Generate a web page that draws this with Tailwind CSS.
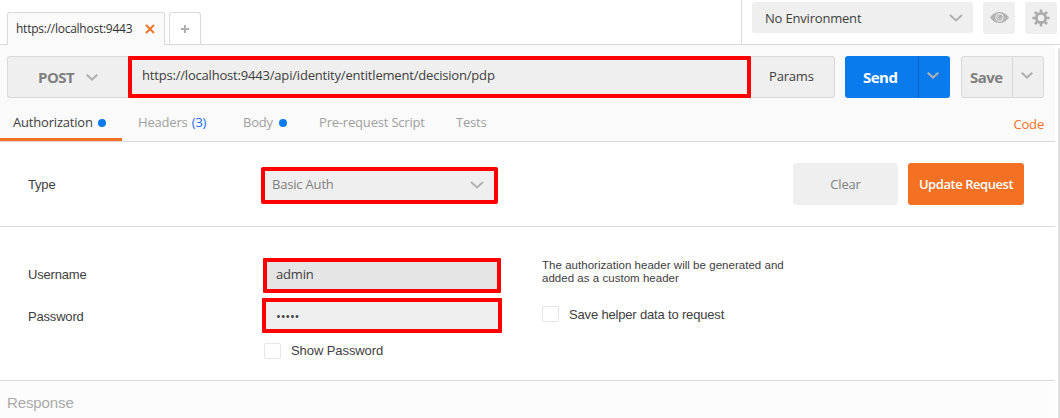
<!DOCTYPE html>
<html lang="en">
<head>
<meta charset="utf-8">
<title>Request builder</title>
<script src="https://cdn.jsdelivr.net/npm/@tailwindcss/browser@4"></script>
</head>
<body class="w-[1060px] h-[418px] overflow-hidden bg-white font-['Open_Sans',sans-serif] text-[13px] leading-[18px] tracking-[-0.19px] text-[#404040] whitespace-nowrap">
<header class="flex h-[45px] border-b border-[#d9d9d9]">
  <div class="flex items-start pt-3 pl-[7px]">
    <div class="-mb-px flex h-[33px] w-[158px] items-center rounded-t-[3px] border border-b-0 border-[#d9d9d9] bg-[#fafafa] pl-2">
      <span class="w-[117px] shrink-0 text-[12px] tracking-[-0.25px] text-[#333]">https://localhost:9443</span>
      <svg class="ml-[12px] w-[10px] h-[10px] shrink-0" viewBox="0 0 10 10" stroke="#f47023" stroke-width="1.8"><path d="M1 1l8 8M9 1L1 9"/></svg>
    </div>
    <div class="ml-1 flex h-8 w-8 items-center justify-center rounded-t-[3px] border border-b-0 border-[#d9d9d9]">
      <svg class="w-2 h-2" viewBox="0 0 8 8" stroke="#b0b0b0" stroke-width="2"><path d="M4 0v8M0 4h8"/></svg>
    </div>
  </div>
  <div class="ml-auto flex w-[319px] items-start border-l border-[#d9d9d9] pt-[2px] pl-[10px]">
    <div class="flex h-[31px] w-[221px] items-center justify-between rounded-[3px] bg-[#efefef] pl-[13px] pr-[10px]">
      <span>No Environment</span>
      <svg class="w-[14px] h-[8px]" viewBox="0 0 14 8" fill="none" stroke="#b0b0b0" stroke-width="2"><path d="M1 1l6 5.500L13 1"/></svg>
    </div>
    <div class="ml-[10px] flex h-8 w-8 items-center justify-center rounded-[3px] bg-[#efefef]">
      <svg class="mb-px w-[19px] h-[11px]" viewBox="0 0 19 11"><path fill="#b2b2b2" d="M0 5.500Q4 0 9.500 0T19 5.500Q15 11 9.500 11T0 5.500Z"/><circle cx="9.500" cy="5.500" r="4.200" fill="#efefef"/><circle cx="9.500" cy="5.500" r="3.100" fill="#aaa"/><path d="M9.500 3.700A1.700 1.700 0 1 0 11.200 5.500" fill="none" stroke="#efefef" stroke-width="1"/></svg>
    </div>
    <div class="ml-[10px] flex h-8 w-8 items-center justify-center rounded-[3px] bg-[#efefef]">
      <svg class="w-[18px] h-[18px]" viewBox="-9 -9 18 18" stroke="#aaa" fill="none"><circle r="4.700" stroke-width="2.800"/><path stroke-width="2.600" d="M0-8.500V-5M0 8.500V5M-8.500 0H-5M8.500 0H5M-6-6L-4-4M6 6L4 4M-6 6L-4 4M6-6L4-4"/></svg>
    </div>
  </div>
</header>
<div class="flex">
<main class="w-[1055px]">
  <section class="h-[97px] border-b border-[#d9d9d9] bg-[#fafafa] pt-[11px]">
    <div class="flex h-[42px] pl-[7px]">
      <div class="flex w-[121px] items-center rounded-l-[3px] border border-r-0 border-[#d9d9d9] bg-[#efefef] pl-[30px]">
        <span class="w-[38px] text-[15px] tracking-[-0.5px] font-bold text-[#808080]">POST</span>
        <svg class="ml-[10px] w-3 h-[7px]" viewBox="0 0 12 7" fill="none" stroke="#b0b0b0" stroke-width="2"><path d="M.7 .7L6 5.600 11.300 .7"/></svg>
      </div>
      <div class="w-[623px] rounded-[1px] border-4 border-[#fe0000] bg-[#efefef] pl-[10px] pt-[6px]"><span>https://localhost:9443/api/identity/entitlement/decision/pdp</span></div>
      <div class="w-[84px] rounded-r-[3px] border border-l-0 border-[#d9d9d9] bg-[#efefef] pt-[10px] pl-[18px]">Params</div>
      <div class="ml-[10px] flex w-[105px] rounded-[3px] bg-[#097bed]">
        <div class="w-[73px] pt-3 pl-[18px] text-[15px] tracking-[-0.5px] font-bold text-white">Send</div>
        <div class="flex flex-1 justify-center border-l border-[#0866c6] pt-[16px] pr-[3px]"><svg class="w-3 h-[7px]" viewBox="0 0 12 7" fill="none" stroke="#b0b0b0" stroke-width="2"><path d="M.7 .7L6 5.600 11.300 .7"/></svg></div>
      </div>
      <div class="ml-[11px] flex w-[83px] rounded-[3px] border border-[#d9d9d9] bg-[#efefef]">
        <div class="w-[50px] pt-[11px] pl-[8px] text-[15px] tracking-[-0.5px] font-bold text-[#808080]">Save</div>
        <div class="flex flex-1 justify-center border-l border-[#d9d9d9] pt-[15px] pr-[3px]"><svg class="w-3 h-[7px]" viewBox="0 0 12 7" fill="none" stroke="#b0b0b0" stroke-width="2"><path d="M.7 .7L6 5.600 11.300 .7"/></svg></div>
      </div>
    </div>
    <nav class="flex h-[43px] text-[#9f9f9f]">
      <div class="flex w-[122px] items-start border-b-3 border-[#f47023] pl-[13px] pt-[15px] text-[#404040]"><span class="w-[79px]">Authorization</span><i class="ml-[6px] mt-[6px] size-2 rounded-full bg-[#097bed]"></i></div>
      <div class="w-[121px] pl-4 pt-[15px]"><span>Headers</span> <span class="ml-px text-[#1a6cf0]">(3)</span></div>
      <div class="flex w-[76px] items-start pt-[15px]"><span class="w-[30px]">Body</span><i class="ml-[6px] mt-[6px] size-2 rounded-full bg-[#097bed]"></i></div>
      <div class="w-[137px] pt-[15px]">Pre-request Script</div>
      <div class="pt-[15px]">Tests</div>
      <div class="ml-auto pr-[11px] pt-[17px] text-[#f47023]">Code</div>
    </nav>
  </section>
  <section class="flex h-[85px] items-start border-b border-[#d9d9d9] pl-[28px] pt-[21px]">
    <div class="w-[233px] pt-[13px] font-['Liberation_Sans',sans-serif]"><span>Type</span></div>
    <div class="mt-1 flex h-[37px] w-[237px] justify-between rounded-[2px] border-4 border-[#fe0000] bg-[#efefef] pl-[7px] pr-[10px] pt-1 text-[#808080]">
      <span>Basic Auth</span>
      <svg class="mt-[6px] w-[14px] h-[8px]" viewBox="0 0 14 8" fill="none" stroke="#b0b0b0" stroke-width="2"><path d="M1 1l6 5.500L13 1"/></svg>
    </div>
    <div class="ml-[295px] flex h-[42px] w-[105px] items-center justify-center rounded-[3px] bg-[#efefef] text-[#808080]"><span>Clear</span></div>
    <div class="ml-[10px] flex h-[42px] w-[116px] items-center justify-center rounded-[3px] bg-[#f47023] font-semibold tracking-[-0.45px] text-white"><span>Update Request</span></div>
  </section>
  <section class="flex h-[154px] border-b border-[#d9d9d9] pl-[28px] font-['Liberation_Sans',sans-serif]">
    <div class="w-[233px] pt-[39px]">
      <div><span>Username</span></div>
      <div class="mt-6"><span>Password</span></div>
    </div>
    <div class="w-[280px] pt-[31px]">
      <div class="ml-[2px] h-[35px] w-[238px] rounded-[1px] border-4 border-[#fe0000] bg-[#e5e5e5] pl-[9px] pt-[3px] font-['Open_Sans',sans-serif]"><span>admin</span></div>
      <div class="ml-px mt-[5px] h-[35px] w-[240px] rounded-[1px] border-4 border-[#fe0000] bg-[#efefef] pl-[10px] pt-[5px] font-['Open_Sans',sans-serif] text-[13px] tracking-[-0.25px]"><span>•••••</span></div>
      <div class="ml-[3px] mt-[10px] flex h-4 items-center"><i class="h-4 w-[17px] rounded-[2px] border border-[#e6e6e6]"></i><span class="ml-[10px] tracking-[-0.08px]">Show Password</span></div>
    </div>
    <div class="pt-[32px] pl-px">
      <p class="text-[11.5px] leading-[13px] tracking-[0.03px]"><span>The authorization header will be generated and</span><br><span>added as a custom header</span></p>
      <div class="mt-[21px] flex h-4 items-center"><i class="h-4 w-[17px] rounded-[2px] border border-[#e6e6e6]"></i><span class="ml-[10px] pt-px tracking-[-0.17px]">Save helper data to request</span></div>
    </div>
  </section>
  <section class="h-[37px] bg-[#fcfcfc] pl-[7px] pt-[13px] font-['Liberation_Sans',sans-serif] text-[15px] tracking-[-0.1px] text-[#a9a9a9]"><span>Response</span></section>
</main>
<div class="ml-[3px] mt-[3px] h-[370px] w-[2px] rounded-tl-[2px] bg-[#e1e1e1]"></div>
</div>
</body>
</html>
